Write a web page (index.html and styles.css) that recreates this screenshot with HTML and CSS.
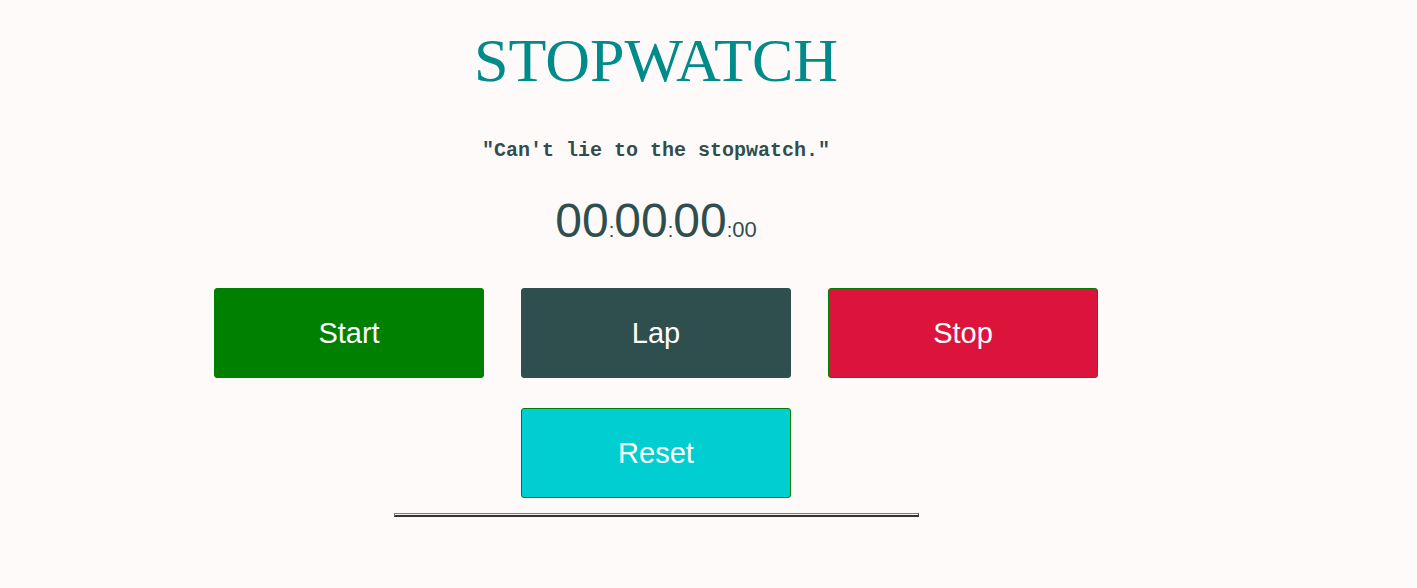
FILE: index.html
```html
<!DOCTYPE html>
<html>
<head>
<meta charset="utf-8">
<title>Stopwatch</title>
<link rel="stylesheet" href="styles.css">
</head>
<body>
<main class="app">
  <h1 class="title">STOPWATCH</h1>
  <p class="quote">"Can't lie to the stopwatch."</p>
  <div class="timer"><span class="big">00</span><span class="sep">:</span><span class="big">00</span><span class="sep">:</span><span class="big">00</span><span class="sep">:</span><span class="small">00</span></div>
  <div class="controls">
    <button class="btn btn-start">Start</button>
    <button class="btn btn-lap">Lap</button>
    <button class="btn btn-stop">Stop</button>
    <button class="btn btn-reset">Reset</button>
  </div>
  <hr class="rule">
</main>
</body>
</html>
```
FILE: styles.css
```css
html, body {
  background: #fffafa;
}
body {
  margin: 8px;
}
.app {
  width: 1296px;
  display: flex;
  flex-direction: column;
  align-items: center;
}
.title {
  margin: 19px 0 0;
  font-family: "Liberation Serif", serif;
  font-weight: normal;
  font-size: 62px;
  line-height: 66px;
  color: #008b8b;
}
.quote {
  margin: 46px 0 0;
  font-family: "Liberation Mono", "Courier New", monospace;
  font-weight: bold;
  font-size: 20px;
  line-height: 24px;
  color: #2f4f4f;
}
.timer {
  margin-top: 30px;
  font-family: "Liberation Sans", Arial, sans-serif;
  color: #2f4f4f;
  line-height: 56px;
}
.big { font-size: 48px; }
.sep { font-size: 20px; }
.small { font-size: 22px; }
.controls {
  margin-top: 28px;
  display: grid;
  grid-template-columns: repeat(3, 270px);
  column-gap: 37px;
  row-gap: 30px;
}
.btn {
  height: 90px;
  border: 1px solid #008000;
  border-radius: 3px;
  font-family: "Liberation Sans", Arial, sans-serif;
  font-size: 29px;
  color: #fff;
  padding: 0;
}
.btn-start { background: #008000; }
.btn-lap { background: #2f4f4f; border-color: #2f4f4f; }
.btn-stop { background: #dc143c; }
.btn-reset { background: #00ced1; grid-column: 2; }
.rule {
  box-sizing: border-box;
  width: 525px;
  height: 4px;
  margin: 15px 0 0;
  border-style: solid;
  border-width: 1px 1px 2px 1px;
  border-color: #808080 #444 #333 #808080;
  background: #f4f0f0;
}
```
